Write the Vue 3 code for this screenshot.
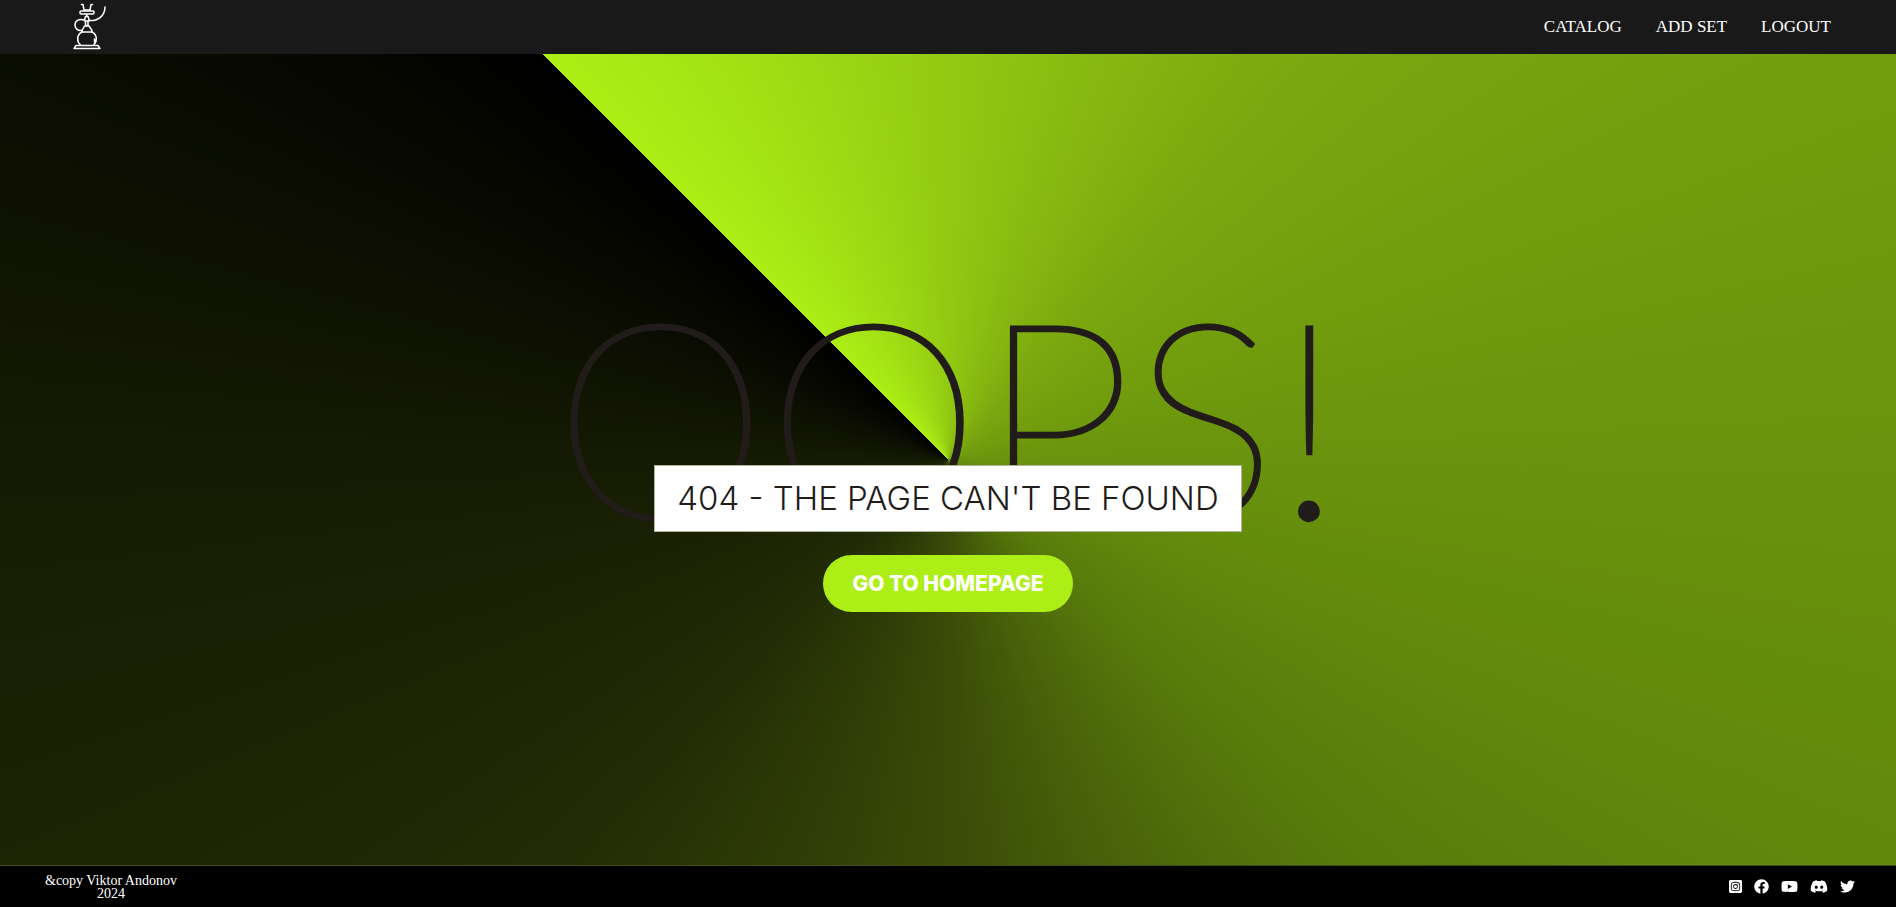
<script setup>
const links = ['Catalog', 'Add set', 'Logout']
const socials = [
  { name: 'Instagram', box: '0 0 448 512', w: 13, d: 'M224 202.660A53.340 53.340 0 1 0 277.360 256 53.380 53.380 0 0 0 224 202.660Zm124.710-41a54 54 0 0 0-30.410-30.410c-21-8.290-71-6.430-94.300-6.430s-73.250-1.930-94.310 6.430a54 54 0 0 0-30.410 30.410c-8.280 21-6.430 71.050-6.430 94.330s-1.850 73.270 6.470 94.340a54 54 0 0 0 30.410 30.410c21 8.290 71 6.430 94.310 6.430s73.240 1.930 94.300-6.430a54 54 0 0 0 30.410-30.410c8.350-21 6.430-71.050 6.430-94.330s1.920-73.260-6.430-94.330ZM224 338a82 82 0 1 1 82-82 81.900 81.900 0 0 1-82 82Zm85.380-148.300a19.140 19.140 0 1 1 19.130-19.140 19.100 19.100 0 0 1-19.090 19.180ZM400 32H48A48 48 0 0 0 0 80v352a48 48 0 0 0 48 48h352a48 48 0 0 0 48-48V80a48 48 0 0 0-48-48Zm-17.120 290c-1.290 25.630-7.140 48.340-25.850 67s-41.400 24.630-67 25.850c-26.410 1.490-105.590 1.490-132 0-25.630-1.290-48.260-7.150-67-25.850s-24.630-41.420-25.850-67c-1.490-26.420-1.490-105.610 0-132 1.290-25.630 7.070-48.340 25.850-67s41.470-24.560 67-25.780c26.410-1.490 105.590-1.490 132 0 25.630 1.290 48.330 7.150 67 25.850s24.630 41.420 25.850 67.050c1.490 26.320 1.490 105.440 0 131.880Z' },
  { name: 'Facebook', box: '0 0 512 512', w: 15, d: 'M504 256C504 119 393 8 256 8S8 119 8 256c0 123.780 90.690 226.380 209.250 245V327.690h-63V256h63v-54.640c0-62.150 37-96.480 93.670-96.480 27.140 0 55.520 4.840 55.520 4.840v61h-31.280c-30.800 0-40.410 19.120-40.410 38.730V256h68.780l-11 71.690h-57.780V501C413.310 482.380 504 379.780 504 256z' },
  { name: 'YouTube', box: '0 0 576 512', w: 17, d: 'M549.655 124.083c-6.281-23.650-24.787-42.276-48.284-48.597C458.781 64 288 64 288 64S117.220 64 74.629 75.486c-23.497 6.322-42.003 24.947-48.284 48.597-11.412 42.867-11.412 132.305-11.412 132.305s0 89.438 11.412 132.305c6.281 23.650 24.787 41.500 48.284 47.821C117.220 448 288 448 288 448s170.780 0 213.371-11.486c23.497-6.321 42.003-24.171 48.284-47.821 11.412-42.867 11.412-132.305 11.412-132.305s0-89.438-11.412-132.305zm-317.510 213.508V175.185l142.739 81.205-142.739 81.201z' },
  { name: 'Discord', box: '0 0 640 512', w: 18, d: 'M524.531 69.836a1.500 1.500 0 0 0-.764-.700A485.065 485.065 0 0 0 404.081 32.030a1.816 1.816 0 0 0-1.923.910 337.461 337.461 0 0 0-14.900 30.600 447.848 447.848 0 0 0-134.426 0 309.541 309.541 0 0 0-15.135-30.600 1.890 1.890 0 0 0-1.924-.910 483.689 483.689 0 0 0-119.688 37.107 1.712 1.712 0 0 0-.788.676C39.068 183.651 18.186 294.690 28.430 404.354a2.016 2.016 0 0 0 .765 1.375 487.666 487.666 0 0 0 146.825 74.189 1.900 1.900 0 0 0 2.063-.676A348.200 348.200 0 0 0 208.120 430.400a1.860 1.860 0 0 0-1.019-2.588 321.173 321.173 0 0 1-45.868-21.853 1.885 1.885 0 0 1-.185-3.126c3.082-2.309 6.166-4.711 9.109-7.137a1.819 1.819 0 0 1 1.900-.256c96.229 43.917 200.410 43.917 295.500 0a1.812 1.812 0 0 1 1.924.233c2.944 2.426 6.027 4.851 9.132 7.160a1.884 1.884 0 0 1-.162 3.126 301.407 301.407 0 0 1-45.890 21.830 1.875 1.875 0 0 0-1 2.611 391.055 391.055 0 0 0 30.014 48.815 1.864 1.864 0 0 0 2.063.700A486.048 486.048 0 0 0 610.700 405.729a1.882 1.882 0 0 0 .765-1.352C623.729 277.594 590.933 167.465 524.531 69.836ZM222.491 337.580c-28.972 0-52.844-26.587-52.844-59.239s23.409-59.241 52.844-59.241c29.665 0 53.306 26.820 52.843 59.239 0 32.654-23.410 59.241-52.843 59.241Zm195.380 0c-28.971 0-52.843-26.587-52.843-59.239s23.409-59.241 52.843-59.241c29.667 0 53.307 26.820 52.844 59.239 0 32.654-23.177 59.241-52.844 59.241Z' },
  { name: 'Twitter', box: '0 0 512 512', w: 15, d: 'M459.370 151.716c.325 4.548.325 9.097.325 13.645 0 138.720-105.583 298.558-298.558 298.558-59.452 0-114.680-17.219-161.137-47.106 8.447.974 16.568 1.299 25.340 1.299 49.055 0 94.213-16.568 130.274-44.832-46.132-.975-84.792-31.188-98.112-72.772 6.498.974 12.995 1.624 19.818 1.624 9.421 0 18.843-1.300 27.614-3.573-48.081-9.747-84.143-51.980-84.143-102.985v-1.299c13.969 7.797 30.214 12.670 47.431 13.319-28.264-18.843-46.781-51.005-46.781-87.391 0-19.492 5.197-37.360 14.294-52.954 51.655 63.675 129.300 105.258 216.365 109.807-1.624-7.797-2.599-15.918-2.599-24.040 0-57.828 46.782-104.934 104.934-104.934 30.213 0 57.502 12.670 76.670 33.137 23.715-4.548 46.456-13.320 66.599-25.340-7.798 24.366-24.366 44.833-46.132 57.827 21.117-2.273 41.584-8.122 60.426-16.243-14.292 20.791-32.161 39.308-52.628 54.253z' },
]
</script>

<template>
  <div class="page">
    <header class="header">
      <a class="logo" href="#" aria-label="Home">
        <svg width="36" height="54" viewBox="0 0 36 54" fill="none" stroke="#fff" stroke-width="1.500" stroke-linecap="round" stroke-linejoin="round">
          <path d="M9.500 4.500h1.500l1 5.500h6l1-5.500h1.500" />
          <rect x="8" y="11" width="14" height="3" rx="1" />
          <path d="M14.800 14.500v2M13.500 16.500h2.500l1 3-1 2v4h-2.500v-4l-1-2zM12.500 21h4.500M17 20.500c9 1 16-5 16-13.500" />
          <path d="M12.500 20c-5-1.500-9.500 0-9.500 5 0 4 3 6 7 5.500" />
          <path d="M12.500 26h4.500l3 4.500v1.500h-10v-1.500z" />
          <path d="M10 32c-6 3-5 10-1.500 13M20 32c6 3 5 10 1.500 13M22.500 39v3" />
          <path d="M4 45.500h22l2 3H2z" />
        </svg>
      </a>
      <nav class="nav">
        <a v-for="link in links" :key="link" href="#">{{ link }}</a>
      </nav>
    </header>

    <main class="main">
      <h1>Oops!</h1>
      <h2>404 - The page can't be found</h2>
      <a class="home" href="#">Go to homepage</a>
    </main>

    <footer class="footer">
      <p>&amp;copy Viktor Andonov<br />2024</p>
      <div class="socials">
        <a v-for="s in socials" :key="s.name" href="#" :aria-label="s.name">
          <svg :viewBox="s.box" :width="s.w" height="15" fill="#fff"><path :d="s.d" /></svg>
        </a>
      </div>
    </footer>
  </div>
</template>

<style>
body {
  margin: 0;
}
</style>

<style scoped>
.page {
  display: flex;
  flex-direction: column;
  min-height: 100vh;
  font-family: "Liberation Serif", serif;
  color: #fff;
}
.header {
  display: flex;
  justify-content: space-between;
  align-items: center;
  height: 54px;
  padding: 0 65px 0 72px;
  background: #191919;
}
.logo {
  display: flex;
}
.nav {
  display: flex;
  gap: 34px;
  font-size: 17px;
  text-transform: uppercase;
}
a {
  color: inherit;
  text-decoration: none;
}
.main {
  flex: 1;
  display: flex;
  flex-direction: column;
  align-items: center;
  justify-content: center;
  font-family: Inter, sans-serif;
  text-transform: uppercase;
  background: conic-gradient(from 315deg, #acee15 0%, #93cb12 12%, #7ba80f 24%, #6b960d 36%, #638a0c 43%, #587a0b 50%, #3a4d08 62%, #222c05 75%, #161c03 87%, #000 100%);
}
h1 {
  margin: 6px 0 0;
  font-family: Lato, sans-serif;
  font-size: 272px;
  line-height: 200px;
  font-weight: 200;
  color: #211b19;
  -webkit-text-stroke: 4px #211b19;
}
h2 {
  margin: -48px 0 0;
  padding: 12px 22px;
  border: 1px solid #afb59a;
  background: #fff;
  color: #211b19;
  font-size: 33px;
  line-height: 41px;
  font-weight: 300;
}
.home {
  margin-top: 23px;
  padding: 14px 29px;
  border-radius: 29px;
  background: #acee15;
  font-size: 21px;
  line-height: 29px;
  font-weight: 800;
}
.footer {
  display: flex;
  align-items: center;
  justify-content: space-between;
  height: 41px;
  padding: 0 41px 0 45px;
  border-top: 1px solid #3f4c20;
  background: #000;
}
.footer p {
  margin: 0;
  font-size: 14px;
  line-height: 13px;
  text-align: center;
}
.socials {
  display: flex;
  gap: 12px;
}
.socials a {
  display: flex;
}
</style>
